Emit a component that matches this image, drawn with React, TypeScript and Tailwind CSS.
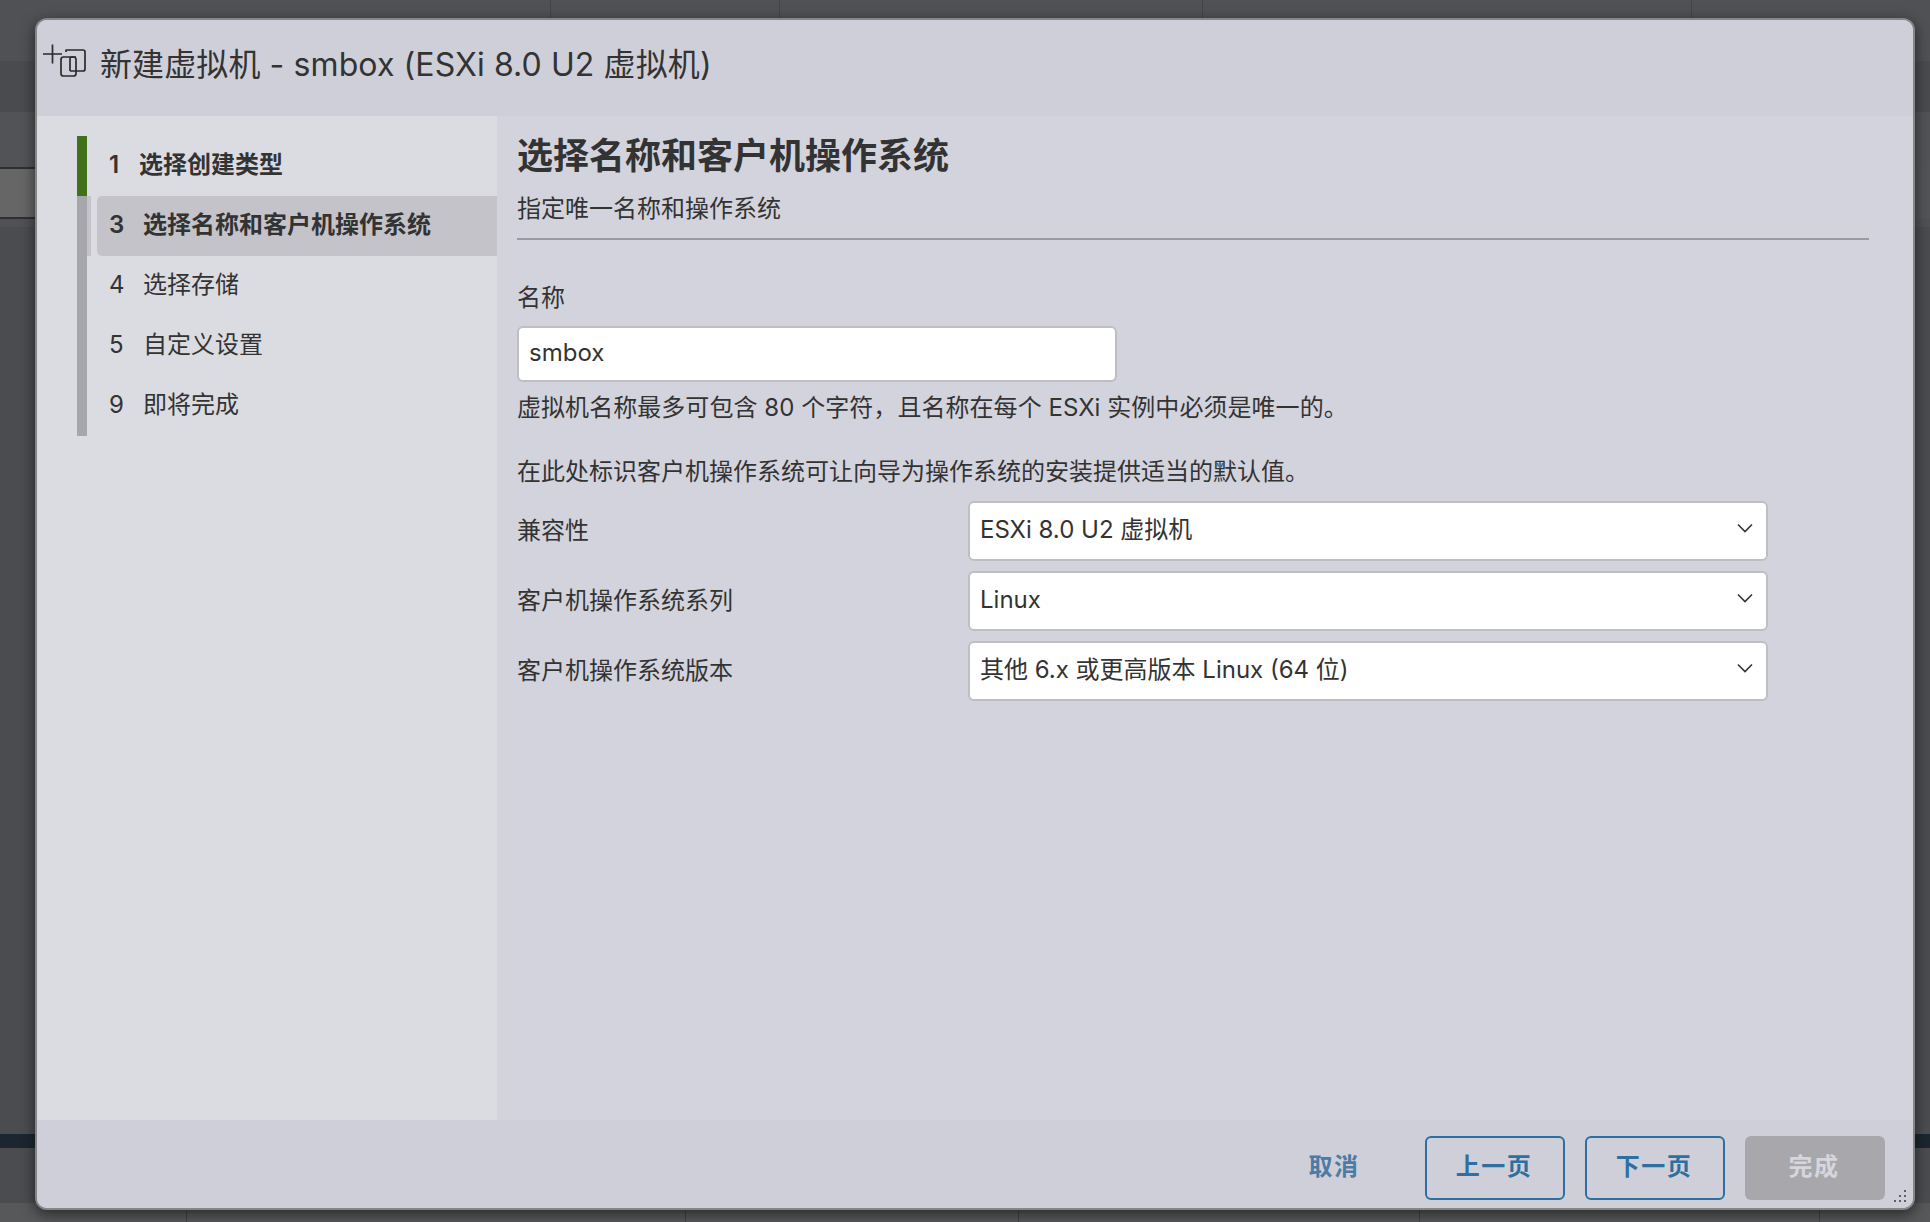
import React from "react";

const font = "font-['Inter','Noto_Sans_CJK_SC',sans-serif]";

function Chevron() {
  return (
    <svg width="16" height="10" viewBox="0 0 16 10" fill="none" className="mb-[6px] shrink-0">
      <path d="M1 1.5 L8 8.5 L15 1.5" stroke="#333" strokeWidth="1.6" />
    </svg>
  );
}

function SelectRow({ label, value }: { label: string; value: string }) {
  return (
    <div className="flex h-[60px] items-center">
      <div className="w-[451px] shrink-0 pb-[1px] text-[24px] leading-8">{label}</div>
      <div className="flex h-[60px] w-[800px] items-center justify-between rounded-[6px] border-2 border-[#bfbfc3] bg-white pl-[10px] pr-[13px]">
        <span className="pb-[2px] text-[24px] leading-8">{value}</span>
        <Chevron />
      </div>
    </div>
  );
}

function Step({ n, label, state }: { n: number; label: string; state: "done" | "active" | "todo" }) {
  const bar = state === "done" ? "bg-[#41701a]" : "bg-[#a7a7ab]";
  return (
    <div className="flex h-[60px]">
      <div className={`w-[10px] shrink-0 ${bar}`} />
      {state === "active" ? <div className="w-[4px] shrink-0 bg-[#c3c3c9]" /> : <div className="w-[4px] shrink-0" />}
      <div
        className={`ml-[6px] flex flex-1 items-center rounded-l-[5px] pb-[2px] pl-[12px] text-[24px] leading-8 ${
          state === "active" ? "bg-[#c3c3c9] font-semibold" : state === "done" ? "font-semibold" : ""
        }`}
      >
        <span className={state === "done" ? "w-[30px]" : "w-[34px]"}>{n}</span>
        <span>{label}</span>
      </div>
    </div>
  );
}

export default function App() {
  return (
    <div className={`relative h-[1222px] w-[1930px] overflow-hidden bg-[#4b4c50] ${font}`}>
      {/* dimmed page behind the modal */}
      <div className="flex h-full flex-col">
        <div className="flex h-[18px] shrink-0 bg-[#505155]">
          <div className="w-[551px] border-r border-[#434448]" />
          <div className="w-[229px] border-r border-[#434448]" />
          <div className="w-[423px] border-r border-[#434448]" />
          <div className="w-[489px] border-r border-[#434448]" />
        </div>
        <div className="h-[43px] shrink-0 bg-[#505155]" />
        <div className="h-[51px] shrink-0 bg-[#4a4b4f]" />
        <div className="h-[55px] shrink-0 bg-[#525357]" />
        <div className="flex h-[52px] shrink-0 bg-[#535458]">
          <div className="w-[35px] border-y-2 border-[#2f2f31] bg-[#666666]" />
        </div>
        <div className="h-[8px] shrink-0 bg-[#505155]" />
        <div className="h-[907px] shrink-0" />
        <div className="h-[14px] shrink-0 bg-[#1c2630]" />
        <div className="h-[55px] shrink-0" />
        <div className="flex flex-1 bg-[#57585a]">
          <div className="w-[187px] border-r border-[#424346]" />
          <div className="w-[499px] border-r border-[#424346]" />
          <div className="w-[333px] border-r border-[#424346]" />
          <div className="w-[401px] border-r border-[#424346]" />
          <div className="w-[400px] border-r border-[#424346]" />
        </div>
      </div>

      {/* modal */}
      <div className="absolute left-[35px] top-[18px] flex h-[1192px] w-[1880px] flex-col overflow-hidden rounded-[12px] border-x-2 border-y-2 border-[#85868a] bg-[#d3d3dd] text-[#333333] shadow-[0_4px_14px_rgba(0,0,0,0.55)]">
        <header className="flex h-[96px] shrink-0 items-center bg-[#cfcfd9] pb-[6px] pl-[5px]">
          <svg width="48" height="36" viewBox="0 0 48 36" fill="none" className="mt-[24px] shrink-0 self-start" stroke="#2b2b2b" strokeWidth="1.7">
            <path d="M1 10 H20 M10.5 0.5 V19.5" />
            <path d="M24 8 V5.5 Q24 6 26 6 H41 Q43 6 43 8 V25 Q43 27 41 27 H28" />
            <rect x="19" y="13" width="15" height="19" rx="2.5" />
            <path d="M34 13 H30 Q28 13 28 15 V27" />
          </svg>
          <h1 className="ml-[10px] text-[32px] font-normal leading-10 tracking-[0.1px]">新建虚拟机 - smbox (ESXi 8.0 U2 虚拟机)</h1>
        </header>

        <div className="flex min-h-0 flex-1">
          <aside className="w-[460px] shrink-0 bg-[#dbdbe2] pl-[40px] pt-[20px]">
            <Step n={1} label="选择创建类型" state="done" />
            <Step n={3} label="选择名称和客户机操作系统" state="active" />
            <Step n={4} label="选择存储" state="todo" />
            <Step n={5} label="自定义设置" state="todo" />
            <Step n={9} label="即将完成" state="todo" />
          </aside>

          <main className="flex-1 pl-[20px] pr-[44px] pt-[18px]">
            <h2 className="text-[36px] font-semibold leading-[44px]">选择名称和客户机操作系统</h2>
            <p className="mt-[15px] text-[24px] leading-8">指定唯一名称和操作系统</p>
            <div className="mt-[13px] h-[2px] bg-[#9a9aa0]" />
            <label className="mt-[42px] block text-[24px] leading-8">名称</label>
            <div className="mt-[12px] flex h-[56px] w-[600px] items-center rounded-[6px] border-2 border-[#bfbfc3] bg-white pb-[3px] pl-[10px] text-[24px]">
              smbox
            </div>
            <p className="mt-[10px] text-[24px] leading-8 tracking-[0.05px]">虚拟机名称最多可包含 80 个字符，且名称在每个 ESXi 实例中必须是唯一的。</p>
            <p className="mt-[32px] text-[24px] leading-8">在此处标识客户机操作系统可让向导为操作系统的安装提供适当的默认值。</p>
            <div className="mt-[13px] flex flex-col gap-[10px]">
              <SelectRow label="兼容性" value="ESXi 8.0 U2 虚拟机" />
              <SelectRow label="客户机操作系统系列" value="Linux" />
              <SelectRow label="客户机操作系统版本" value="其他 6.x 或更高版本 Linux (64 位)" />
            </div>
          </main>
        </div>

        <footer className="relative flex h-[88px] shrink-0 items-start justify-end gap-5 bg-[#cfcfd9] pr-[28px] pt-[16px]">
          <button className="h-[64px] w-[140px] pb-[2px] pr-[2px] text-[24px] font-semibold tracking-[1.5px] text-[#4d7ba3]">取消</button>
          <button className="h-[64px] w-[140px] rounded-[6px] border-2 border-[#2e6f9f] pb-[2px] pr-[2px] text-[24px] font-semibold tracking-[1.5px] text-[#2e6f9f]">上一页</button>
          <button className="h-[64px] w-[140px] rounded-[6px] border-2 border-[#2e6f9f] pb-[2px] pr-[2px] text-[24px] font-semibold tracking-[1.5px] text-[#2e6f9f]">下一页</button>
          <button className="h-[64px] w-[140px] rounded-[6px] bg-[#a8a8ac] pb-[2px] pr-[2px] text-[24px] font-semibold tracking-[1.5px] text-[#d6d6dc]">完成</button>
          <svg width="14" height="14" viewBox="0 0 14 14" className="absolute bottom-[5px] right-[6px]" fill="#444">
            <circle cx="12" cy="2" r="1.1" />
            <circle cx="7" cy="7" r="1.1" />
            <circle cx="12" cy="7" r="1.1" />
            <circle cx="2" cy="12" r="1.1" />
            <circle cx="7" cy="12" r="1.1" />
            <circle cx="12" cy="12" r="1.1" />
          </svg>
        </footer>
      </div>
    </div>
  );
}
